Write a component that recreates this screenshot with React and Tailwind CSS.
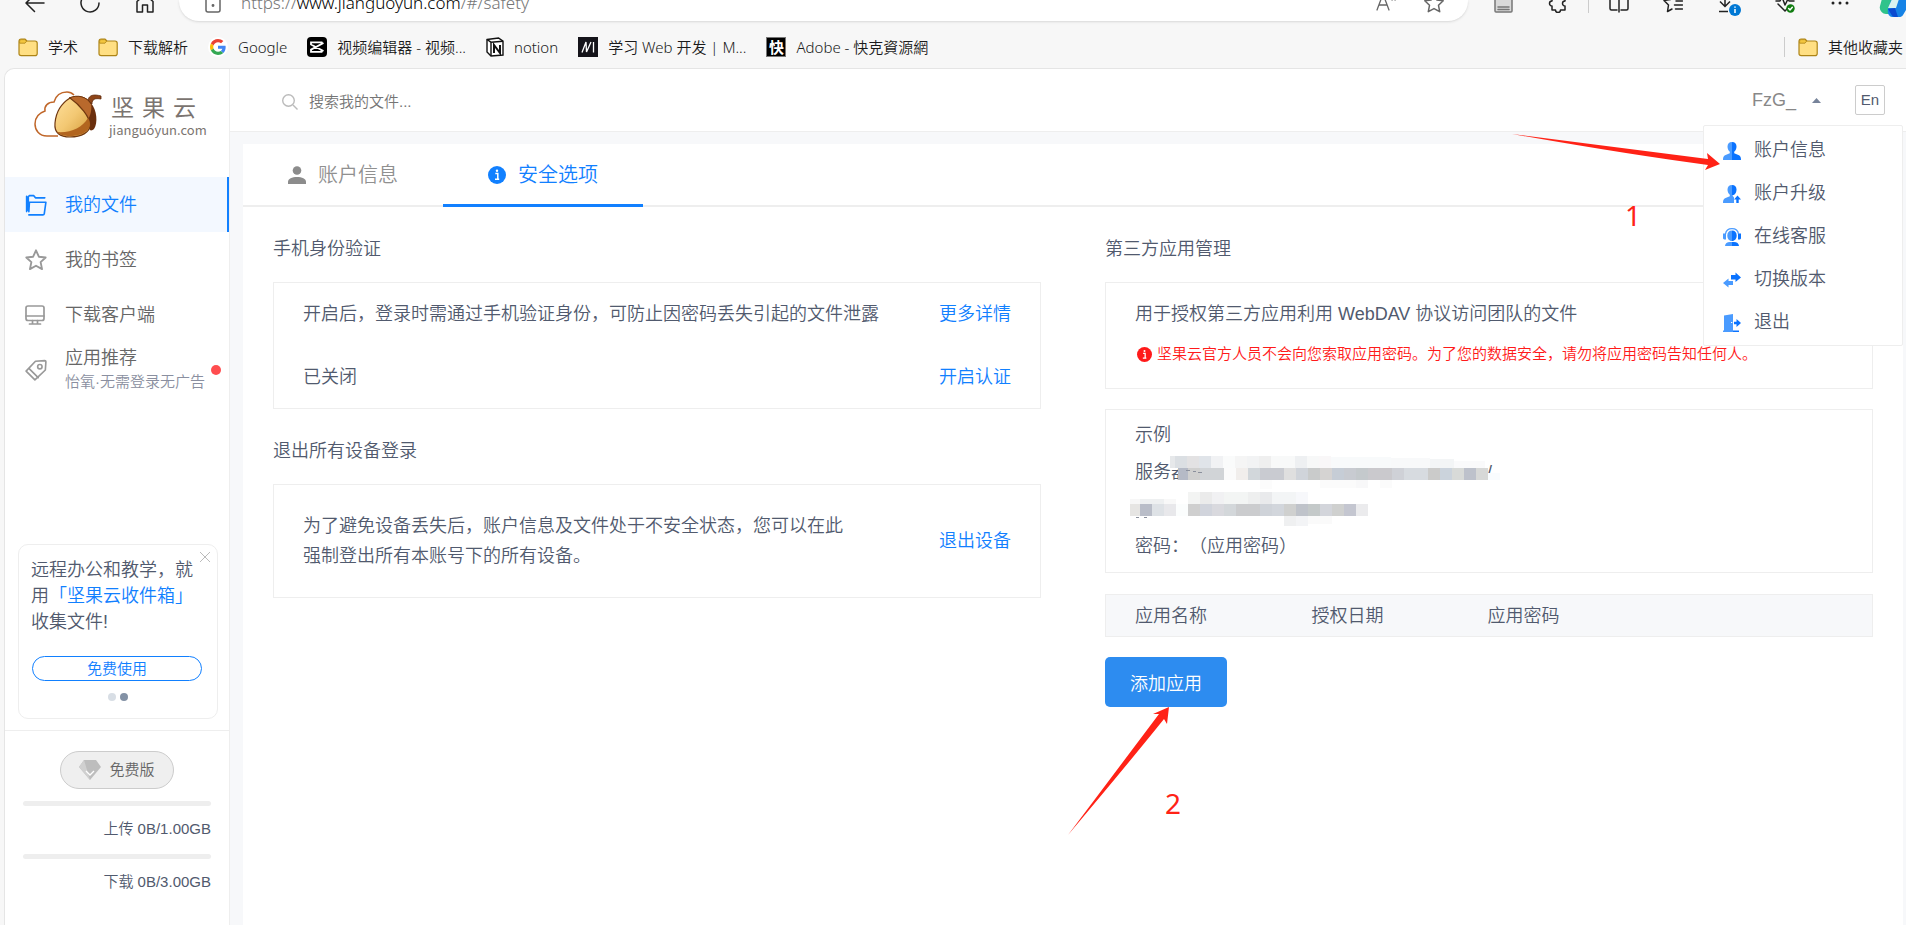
import { useState } from "react";

const bookmarks = [
  { id: "study", label: "学术", icon: <FolderIcon /> },
  { id: "parse", label: "下载解析", icon: <FolderIcon /> },
  { id: "google", label: "Google", icon: <GoogleIcon /> },
  { id: "capcut", label: "视频编辑器 - 视频...", icon: <CapcutIcon /> },
  { id: "notion", label: "notion", icon: <NotionIcon /> },
  { id: "mdn", label: "学习 Web 开发 | M...", icon: <MdnIcon /> },
  { id: "adobe", label: "Adobe - 快克資源網", icon: <KuaiIcon /> },
];

const menuItems = [
  { id: "info", label: "账户信息", icon: <MenuUserIcon /> },
  { id: "upgrade", label: "账户升级", icon: <MenuUpgradeIcon /> },
  { id: "support", label: "在线客服", icon: <MenuSupportIcon /> },
  { id: "version", label: "切换版本", icon: <MenuSwitchIcon /> },
  { id: "exit", label: "退出", icon: <MenuExitIcon /> },
];

// x, y, width, height, fill
const maskBlocks = [
  [40, 0, 5, 12, "#e6e8ea"], [45, 0, 12, 12, "#dbdfe3"], [57, 0, 12, 12, "#e3e2e3"], [69, 0, 12, 12, "#e0e4e9"],
  [81, 0, 12, 12, "#f1f2f4"], [93, 0, 12, 12, "#fafbfb"], [105, 0, 12, 12, "#f5f5f5"], [117, 0, 12, 12, "#f2f3f4"],
  [129, 0, 12, 12, "#efefef"], [141, 0, 24, 12, "#f8f9f9"], [165, 0, 12, 12, "#eef0f2"], [177, 0, 12, 12, "#f7f8f8"],
  [189, 0, 12, 12, "#f9f7f8"], [201, 1, 60, 11, "#f8fafb"], [261, 2, 39, 10, "#f8f9fa"], [300, 3, 24, 9, "#f3f5f6"],
  [324, 5, 31, 7, "#fafafb"],
  [48, 12, 10, 12, "#b5bac6"], [58, 12, 12, 12, "#d0d0cf"], [70, 12, 24, 12, "#d1d4d7"], [94, 12, 12, 12, "#fbfbfb"],
  [106, 12, 12, 12, "#f1eeec"], [118, 12, 12, 12, "#d2d7db"], [130, 12, 24, 12, "#c9cbd1"], [154, 12, 12, 12, "#dfdfdf"],
  [166, 12, 12, 12, "#d0d4da"], [178, 12, 12, 12, "#c9cbcb"], [190, 12, 12, 12, "#d5d3d2"], [202, 12, 12, 12, "#c6cdd6"],
  [214, 12, 12, 12, "#c8cbd1"], [226, 12, 12, 12, "#c4c9cc"], [238, 12, 24, 12, "#cac9cd"], [262, 12, 12, 12, "#cfd1d7"],
  [274, 12, 24, 12, "#d7dbe0"], [298, 12, 12, 12, "#cbcbca"], [310, 12, 12, 12, "#cbd3dc"], [322, 12, 12, 12, "#d8dad8"],
  [334, 12, 12, 12, "#bdc1cb"], [346, 12, 12, 12, "#d7d8d7"], [358, 17, 12, 7, "#f9fcfe"],
  [130, 24, 12, 9, "#fcfcfc"], [190, 24, 36, 8, "#fbfbfb"], [226, 24, 12, 8, "#f8f8f9"], [250, 24, 12, 8, "#fbfbfb"],
  [0, 43, 10, 5, "#f7f7f7"], [10, 43, 24, 5, "#eef0f1"], [34, 43, 12, 5, "#f8f8f8"],
  [58, 36, 12, 12, "#f3f4f3"], [70, 36, 12, 12, "#ebebeb"], [82, 36, 12, 12, "#f1f1f3"], [94, 36, 24, 12, "#f3f5f4"],
  [118, 36, 12, 12, "#eeefef"], [130, 36, 12, 12, "#e9eaec"], [142, 36, 24, 12, "#f3f5f6"], [166, 36, 12, 12, "#f7f8fb"],
  [0, 48, 10, 12, "#e6e5e3"], [10, 48, 12, 12, "#b9bdc8"], [22, 48, 12, 12, "#dee2e6"], [34, 48, 12, 12, "#e8e8eb"],
  [46, 48, 12, 12, "#fbfdfd"], [58, 48, 12, 12, "#cfcfcf"], [70, 48, 12, 12, "#d1d4dc"], [82, 48, 12, 12, "#d9d9de"],
  [94, 48, 12, 12, "#d3d7da"], [106, 48, 24, 12, "#cbccce"], [130, 48, 12, 12, "#cfd3d9"], [142, 48, 12, 12, "#d2d6dc"],
  [154, 48, 12, 12, "#cfd0cf"], [166, 48, 12, 12, "#bfc3ca"], [178, 48, 12, 12, "#c4c9c9"], [190, 48, 12, 12, "#d3d5db"],
  [202, 48, 12, 12, "#cfd0cf"], [214, 48, 12, 12, "#c4c6d0"], [226, 48, 12, 12, "#ebebed"],
  [154, 60, 12, 10, "#eff0f1"], [166, 60, 12, 10, "#f3f4f6"], [178, 60, 24, 8, "#fafafa"],
];

function FolderIcon() {
  return (
    <svg className="h-5 w-5 shrink-0" viewBox="0 0 20 20" aria-hidden="true">
      <path d="M1 4.500C1 2.800 1.800 2 3.200 2H7l2 2h8c1.400 0 2.200.8 2.200 2.200v10.200c0 1.400-.8 2.200-2.200 2.200H3.200C1.800 18.600 1 17.800 1 16.400z" fill="#ffdf83" stroke="#ad8416" strokeWidth="1.200" />
      <path d="M1.600 4.500c0-1.400.5-1.900 1.600-1.900h3.600L8.600 4.200 7 6.200H1.600z" fill="#f3c63f" stroke="#ad8416" strokeWidth=".8" />
    </svg>
  );
}

function GoogleIcon() {
  return (
    <span className="flex h-5 w-5 shrink-0 items-center justify-center rounded-full bg-white">
      <svg className="h-4 w-4" viewBox="0 0 48 48" aria-hidden="true">
        <path fill="#EA4335" d="M24 9.500c3.540 0 6.710 1.220 9.210 3.600l6.850-6.850C35.900 2.380 30.470 0 24 0 14.620 0 6.510 5.380 2.560 13.220l7.980 6.190C12.430 13.720 17.740 9.500 24 9.500z" />
        <path fill="#4285F4" d="M46.980 24.550c0-1.570-.15-3.090-.38-4.550H24v9.020h12.940c-.58 2.960-2.260 5.480-4.780 7.180l7.730 6c4.510-4.180 7.090-10.360 7.090-17.650z" />
        <path fill="#FBBC05" d="M10.530 28.590c-.48-1.450-.76-2.990-.76-4.590s.27-3.140.76-4.590l-7.980-6.190C.92 16.460 0 20.120 0 24c0 3.880.92 7.540 2.560 10.780z" />
        <path fill="#34A853" d="M24 48c6.480 0 11.930-2.130 15.890-5.810l-7.730-6c-2.150 1.450-4.920 2.300-8.160 2.300-6.260 0-11.570-4.220-13.470-9.910l-7.980 6.190C6.510 42.620 14.620 48 24 48z" />
      </svg>
    </span>
  );
}

function CapcutIcon() {
  return (
    <svg className="h-5 w-5 shrink-0" viewBox="0 0 20 20" aria-hidden="true">
      <rect width="20" height="20" rx="4" fill="#000" />
      <path d="M14.500 7.400V5.300H4v2.200L16.500 14M14.500 12.600v2.200H4v-2.200L16.500 6" fill="none" stroke="#fff" strokeWidth="1.800" />
    </svg>
  );
}

function NotionIcon() {
  return (
    <svg className="h-5 w-[18px] shrink-0" viewBox="0 0 18 20" aria-hidden="true">
      <path d="M1 2.500 12.500 1 17 4.200V18L5 19 1 15z" fill="#fff" stroke="#111" strokeWidth="1.400" />
      <path d="M1 2.500 5 5.200 17 4.200M5 5.200V19" fill="none" stroke="#111" strokeWidth="1.400" />
      <path d="M8 16V8l6 8V8" fill="none" stroke="#111" strokeWidth="2" />
    </svg>
  );
}

function MdnIcon() {
  return (
    <svg className="h-5 w-5 shrink-0" viewBox="0 0 20 20" aria-hidden="true">
      <rect width="20" height="20" fill="#15141a" />
      <path d="M4 15.500 8 5l.5 10L13 5M15.500 5v10.500" fill="none" stroke="#fff" strokeWidth="1.300" />
    </svg>
  );
}

function KuaiIcon() {
  return (
    <span className="flex h-5 w-5 shrink-0 items-center justify-center border border-[#777] bg-black text-[15px] leading-4 font-bold text-white">
      快
    </span>
  );
}

function Stroke({ children, className = "h-5 w-5", color = "#222", width = 1.5 }) {
  return (
    <svg
      className={`${className} shrink-0`}
      viewBox="0 0 20 20"
      fill="none"
      stroke={color}
      strokeWidth={width}
      strokeLinecap="round"
      strokeLinejoin="round"
      aria-hidden="true"
    >
      {children}
    </svg>
  );
}

function ToolButton({ label, children }) {
  return (
    <button type="button" aria-label={label} className="shrink-0">
      {children}
    </button>
  );
}

function BrowserToolbar() {
  return (
    <div className="flex h-[21px]">
      <div className="flex h-[13px] items-end gap-[35px] pl-[25px]">
        <ToolButton label="后退">
          <Stroke><path d="M19 10H1.500M9.500 1.500 1 10l8.500 8.500" /></Stroke>
        </ToolButton>
        <ToolButton label="刷新">
          <Stroke><path d="M19 10a9 9 0 1 1-2.600-6.400L19 6M19 1v5h-5" /></Stroke>
        </ToolButton>
        <ToolButton label="主页">
          <Stroke><path d="M2 8.500 10 1.500l8 7V19h-5.500v-7h-5v7H2z" /></Stroke>
        </ToolButton>
      </div>
      <div className="ml-6 flex h-[21px] flex-1 rounded-b-[20px] bg-white px-6 shadow-sm">
        <div className="flex h-[13px] flex-1 items-end">
          <Stroke className="mr-[18px] h-5 w-5" color="#666">
            <rect x="3" y="5" width="14" height="14" rx="2" />
            <path d="M6 5V3a4 4 0 0 1 8 0v2" />
            <circle cx="10" cy="12.500" r=".7" fill="#666" />
          </Stroke>
          <span className="font-[family-name:'Noto_Sans','Noto_Sans_CJK_SC',sans-serif] text-[17px] leading-5 text-[#767676]">
            https://<span className="text-black">www.jianguoyun.com</span>/#/safety
          </span>
        </div>
        <div className="flex h-[13px] items-end gap-7">
          <ToolButton label="大声朗读">
            <Stroke color="#666" width={1.300}><path d="M1 17 7 1l6 16M3 12h8M15 2c1.500 1 1.500 3 1 5M18 1c1.500 2 1.500 4 1 6" /></Stroke>
          </ToolButton>
          <ToolButton label="收藏此页">
            <Stroke color="#666"><path d="m10 1 2.800 5.900 6.400.9-4.700 4.500 1.200 6.400-5.700-3.100-5.700 3.100 1.200-6.400L.8 7.800l6.400-.9z" /></Stroke>
          </ToolButton>
        </div>
      </div>
      <div className="flex h-[13px] items-end pl-[26px]">
        <ToolButton label="阅读模式">
          <Stroke color="#777"><rect x="1" y="1" width="17" height="18" rx="1" fill="#d9d9d9" /><path d="M4 14h11M4 16.500h11" /></Stroke>
        </ToolButton>
        <div className="mr-5 ml-[34px] flex items-end gap-5">
          <ToolButton label="扩展">
            <Stroke><path d="M4 4h3.500a2.500 2.500 0 0 1 5 0H17v4a2.400 2.400 0 1 0 0 5v4H12.500a2.500 2.500 0 0 1-5 0H4V13a2.400 2.400 0 1 1 0-5z" /></Stroke>
          </ToolButton>
          <span className="h-5 w-px bg-[#ccc]" />
        </div>
        <div className="flex items-end gap-[34px]">
          <ToolButton label="分屏">
            <Stroke><path d="M8 3H1v12.500c0 1 .6 1.500 1.500 1.500H8M12 3h7v12.500c0 1-.6 1.500-1.500 1.500H12M10 1v18" /></Stroke>
          </ToolButton>
          <ToolButton label="收藏夹">
            <Stroke><path d="M12 5 10 1 7.500 6.500 1 7.500l4.500 4.500-1 6.500L9 16M13 8h6.500M11.500 12h8M12.500 16h7" /></Stroke>
          </ToolButton>
          <ToolButton label="下载">
            <svg className="h-5 w-6 overflow-visible" viewBox="0 0 24 20" fill="none" stroke="#222" strokeWidth="1.500" aria-hidden="true">
              <path d="M8 0v13M3 8.500l5 5 5-5M2 18.500h9" />
              <circle cx="18" cy="17" r="6" fill="#0078d4" stroke="none" />
              <path d="M18 16v4M18 13.400v1.400" stroke="#fff" />
            </svg>
          </ToolButton>
          <ToolButton label="浏览器概要">
            <Stroke><path d="M1 8h4l2-4 3 8 3-6 1 2h5M3 11l7 7 3-3" /><circle cx="15.500" cy="15.500" r="4.200" fill="#107c10" stroke="none" /><path d="m13.700 15.500 1.300 1.400 2.300-2.600" stroke="#fff" /></Stroke>
          </ToolButton>
          <ToolButton label="更多">
            <svg className="h-5 w-5" viewBox="0 0 20 20" fill="#222" aria-hidden="true">
              <circle cx="4" cy="10" r="1.500" /><circle cx="11" cy="10" r="1.500" /><circle cx="18" cy="10" r="1.500" />
            </svg>
          </ToolButton>
          <ToolButton label="Copilot">
            <svg className="-mb-1 -ml-1 h-7 w-[27px]" viewBox="0 0 27 28" aria-hidden="true">
              <path d="M8 3h12l-5 20c-.5 1.500-1.500 2-3 2H7c-4 0-7-4-6-8L4 6c.6-2 2-3 4-3z" fill="#2fc38b" />
              <path d="M9 20 14 5h13v16l-3 5c-1 1.500-2 2-4 2h-7c-3 0-5-4-4-8z" fill="#1683e6" />
              <path d="M9 20l3 5c1 2 2 3 4 3h3l-3-9z" fill="#0b4ad0" />
              <path d="M13 10h7l-3 9h-8z" fill="#d9f3f0" />
            </svg>
          </ToolButton>
        </div>
      </div>
    </div>
  );
}

function BookmarksBar() {
  return (
    <nav aria-label="收藏夹栏" className="flex h-[47px] items-center overflow-hidden pt-1 pl-[18px] font-[family-name:'Noto_Sans','Noto_Sans_CJK_SC',sans-serif] text-[15px] leading-5 text-[#1b1b1b]">
      <div className="flex flex-1 items-center gap-5">
        {bookmarks.map((item) => (
          <a key={item.id} href="#bookmark" className="flex items-center gap-[10px] whitespace-nowrap">
            {item.icon}
            <span>{item.label}</span>
          </a>
        ))}
      </div>
      <a href="#bookmark" className="flex items-center gap-[10px] pr-[3px] whitespace-nowrap">
        <span className="mr-[3px] h-5 w-px bg-[#ccc]" />
        <FolderIcon />
        <span>其他收藏夹</span>
      </a>
    </nav>
  );
}

function Logo() {
  return (
    <a href="#home" className="flex h-[108px] items-start gap-[7px] pt-[21px] pl-[29px]" aria-label="坚果云">
      <svg className="h-12 w-[68px] shrink-0" viewBox="0 0 68 48" aria-hidden="true">
        <defs>
          <linearGradient id="nut" x1="0" y1="0" x2="1" y2="1">
            <stop offset="0" stopColor="#ffe09c" />
            <stop offset=".5" stopColor="#f3c873" />
            <stop offset="1" stopColor="#d29a38" />
          </linearGradient>
        </defs>
        <path d="M24 46H13C5 46 1 40 1 34c0-7 4-11 10-13-1-5 3-9 9-9 2-7 7-10 13-10 3 0 5 1 7 3" fill="none" stroke="#c0672a" strokeWidth="1.500" />
        <path d="M35 8c8-4 17-2 22 5 6 7 7 20 3 26-1 1-3 2-4 1z" fill="#6b2f0d" />
        <path d="M35 8c8-4 17-2 22 5 1 6 0 12-4 18l-2 1z" fill="#b9692c" />
        <path d="M58 14c0-5 3-6 9-5V6c-7-2-12-1-13 4z" fill="#8e4518" stroke="#5f290b" strokeWidth=".8" />
        <path d="M36 8c-8 5-14 14-15 25-1 10 5 14 15 14 12 0 20-5 20-12 0-8-10-20-20-27z" fill="url(#nut)" stroke="#70370f" strokeWidth="1.200" />
        <path d="M23 42c14 1 25-4 31-14 6 9-2 18-18 18-6 0-10-1-13-4z" fill="#b2651f" />
        <path d="M35 8c9-4 18-1 22 6" fill="none" stroke="#70370f" />
      </svg>
      <span className="flex flex-col pt-1 text-[#7b7470]">
        <span className="flex gap-2 pl-[2px] text-[23px] leading-7 font-normal">
          <span>坚</span>
          <span>果</span>
          <span>云</span>
        </span>
        <span className="font-[family-name:'Noto_Sans_CJK_SC',sans-serif] text-[13px] leading-4 font-normal">jianguóyun.com</span>
      </span>
    </a>
  );
}

function NavItem({ icon, label, note, active }) {
  return (
    <a
      href="#nav"
      aria-current={active ? "page" : undefined}
      className={`flex h-[55px] items-center border-r-2 pl-5 text-[18px] leading-6 ${
        active ? "border-[#1180ff] bg-[#f3f8ff] text-[#1180ff]" : "border-transparent text-[#666]"
      }`}
    >
      <span className="w-10">{icon}</span>
      {note ? (
        <>
          <span className="flex flex-1 flex-col whitespace-nowrap">
            <span>{label}</span>
            <span className="text-[15px] text-[#8a8fa0]">{note}</span>
          </span>
          <span className="mr-[6px] h-[10px] w-[10px] shrink-0 rounded-full bg-[#ff4d4f]" />
        </>
      ) : (
        <span>{label}</span>
      )}
    </a>
  );
}

function PromoCard({ onClose }) {
  return (
    <div className="relative mr-[11px] ml-[13px] h-[175px] rounded-[10px] border border-[#eee] px-3 pt-3">
      <button type="button" aria-label="关闭" onClick={onClose} className="absolute top-[6px] right-[6px]">
        <svg className="h-3 w-3" viewBox="0 0 12 12" stroke="#bbb" aria-hidden="true">
          <path d="m1 1 10 10M11 1 1 11" />
        </svg>
      </button>
      <p className="text-[18px] leading-[26px] text-[#515a6e]">
        远程办公和教学，就
        <br />用<a href="#inbox" className="text-[#1180ff]">「坚果云收件箱」</a>
        <br />
        收集文件!
      </p>
      <button type="button" className="mt-[21px] ml-px block h-[25px] w-[170px] rounded-full border border-[#1180ff] text-[15px] leading-5 text-[#1180ff]">
        免费使用
      </button>
      <div className="mt-3 flex justify-center gap-1">
        <span className="h-2 w-2 rounded-full bg-[#d8dee5]" />
        <span className="h-2 w-2 rounded-full bg-[#8391a5]" />
      </div>
    </div>
  );
}

function Quota({ label }) {
  return (
    <div>
      <div className="h-[5px] rounded-full bg-[#eee]" />
      <p className="mt-3 h-9 text-right text-[15px] leading-[22px] text-[#515a6e]">{label}</p>
    </div>
  );
}

function Sidebar() {
  const [promoOpen, setPromoOpen] = useState(true);

  return (
    <aside className="flex w-[225px] shrink-0 flex-col border-r border-[#eee]">
      <Logo />
      <nav aria-label="主导航">
        <NavItem
          active
          label="我的文件"
          icon={
            <Stroke className="h-[22px] w-[22px]" color="#1180ff">
              <path d="M3 15V2.500L4 1.500h4l1.500 2H18M3.500 16l.5-8.500h15L17.500 18q-.2 1-1.200 1H3.500M1.500 16V2" />
            </Stroke>
          }
        />
        <NavItem
          label="我的书签"
          icon={
            <Stroke className="h-[22px] w-[22px]" color="#999" width={1.700}>
              <path d="m10 1.200 2.600 5.800 6.200.7-4.600 4.200 1.300 6.400L10 15.200l-5.500 3.100 1.300-6.400L1.200 7.700 7.400 7z" />
            </Stroke>
          }
        />
        <NavItem
          label="下载客户端"
          icon={
            <Stroke color="#999" width={1.700}>
              <rect x="1" y="1" width="18" height="14.500" rx="2" />
              <path d="M1 11h18M7.500 15.500v3M12.500 15.500v3M4.500 19h11" />
            </Stroke>
          }
        />
        <NavItem
          label="应用推荐"
          note="怡氧·无需登录无广告"
          icon={
            <Stroke className="h-[22px] w-[22px]" color="#999" width={1.500}>
              <path d="M9.500 2 18 1.500q1 0 1 1L18.500 10 9 19 1 11zM4 9l8 8" />
              <circle cx="13.500" cy="7" r="2" />
            </Stroke>
          }
        />
      </nav>
      <div className="mt-auto pt-6">
        {promoOpen ? <PromoCard onClose={() => setPromoOpen(false)} /> : null}
        <div className="mt-[11px] h-[195px] border-t border-[#eee] pt-5 pr-[18px] pl-[18px]">
          <button type="button" className="mx-auto flex h-[38px] w-[114px] items-center justify-center gap-2 rounded-full border border-[#ccc] bg-[#efefef] text-[15px] text-[#666]">
            <svg className="h-[22px] w-[22px]" viewBox="0 0 22 22" aria-hidden="true">
              <path d="M5 1h12l5 7-11 13L0 8z" fill="#bdbdbd" />
              <path d="M5 1 0 8l11 13z" fill="#d0d0d0" />
              <path d="m7 12 4 4 4-4" fill="none" stroke="#fff" strokeWidth="1.300" />
            </svg>
            免费版
          </button>
          <div className="mt-3">
            <Quota label="上传 0B/1.00GB" />
            <Quota label="下载 0B/3.00GB" />
          </div>
        </div>
      </div>
    </aside>
  );
}

function MenuUserIcon() {
  return (
    <svg className="h-[18px] w-[18px]" viewBox="0 0 18 18" aria-hidden="true">
      <path d="M9 0C6 0 4.500 2 4.500 4.500c0 2 .8 4 2.300 5.200v1.500L2 13.200C.5 14 0 15.500 0 18h9z" fill="#4a9bff" />
      <path d="M9 0c3 0 4.500 2 4.500 4.500 0 2-.8 4-2.300 5.200v1.500l4.800 2c1.500.8 2 2.300 2 4.800H9z" fill="#0a73ff" />
    </svg>
  );
}

function MenuUpgradeIcon() {
  return (
    <svg className="h-[18px] w-[18px]" viewBox="0 0 18 18" aria-hidden="true">
      <path d="M9 0C6 0 4.500 2 4.500 4.500c0 2 .8 4 2.300 5.200v1.500L2 13.200C.5 14 0 15.500 0 18h11v-5.500L9 10z" fill="#4a9bff" />
      <path d="M9 0c3 0 4.500 2 4.500 4.500 0 2-.8 4-2.300 5.200l-2.200.8z" fill="#0a73ff" />
      <path d="m14.500 10.500 3.500 4h-2.300V18h-2.400v-3.500H11z" fill="#0a73ff" />
    </svg>
  );
}

function MenuSupportIcon() {
  return (
    <svg className="h-[18px] w-[18px]" viewBox="0 0 18 18" aria-hidden="true">
      <path d="M9 2.500C5.800 2.500 4.300 4.500 4.300 7.500S6 13 9 13zM2 18c.3-2.500 2-4 5-4h2v4zM0 5.500h3v6H1L0 10.500z" fill="#4a9bff" />
      <path d="M9 2.500c3.200 0 4.700 2 4.700 5S12 13 9 13zM16 18c-.3-2.500-2-4-5-4H9v4zM18 5.500h-3v6h2l1-1z" fill="#0a73ff" />
      <path d="M2.500 6C3 2.500 5.500.7 9 .7s6 1.800 6.500 5.300" fill="none" stroke="#4a9bff" strokeWidth="1.300" />
    </svg>
  );
}

function MenuSwitchIcon() {
  return (
    <svg className="h-[18px] w-[18px]" viewBox="0 0 18 18" aria-hidden="true">
      <path d="M8 4h4.500V1.500L18 6.500l-5.500 4.500V8.500H8z" fill="#0a73ff" />
      <path d="M10 10H5.500V7.500L0 12l5.500 4.500V14H10z" fill="#4a9bff" />
    </svg>
  );
}

function MenuExitIcon() {
  return (
    <svg className="h-[18px] w-[18px]" viewBox="0 0 18 18" aria-hidden="true">
      <path d="M1 1.500 10 0v18H0v-1.500h1z" fill="#4a9bff" />
      <path d="M8 8.500h1.300" stroke="#fff" />
      <path d="M10 16.500h6V18h-6zM11 7.800h2.500V5L18 9l-4.500 4v-2.700H11z" fill="#0a73ff" />
    </svg>
  );
}

function InfoDot({ className }) {
  return (
    <svg className={`${className} shrink-0`} viewBox="0 0 18 18" aria-hidden="true">
      <circle cx="9" cy="9" r="9" fill="currentColor" />
      <path d="M7.300 7.500h2.500V13M7 13.200h4.200" fill="none" stroke="#fff" strokeWidth="1.500" />
      <circle cx="9" cy="4.800" r="1.200" fill="#fff" />
    </svg>
  );
}

function TopBar() {
  const [menuOpen, setMenuOpen] = useState(true);

  return (
    <header className="relative flex h-[63px] items-center border-b border-[#eee] pr-[21px] pl-[52px]">
      <label className="flex flex-1 items-center gap-[11px] pt-1">
        <svg className="h-4 w-4" viewBox="0 0 16 16" fill="none" stroke="#bbb" strokeWidth="1.400" aria-hidden="true">
          <circle cx="6.500" cy="6.500" r="5.800" />
          <path d="m11 11 4.500 4.500" />
        </svg>
        <input
          type="text"
          aria-label="搜索我的文件"
          placeholder="搜索我的文件..."
          className="w-60 text-[15px] leading-6 text-[#666] outline-none placeholder:text-[#757575]"
        />
      </label>
      <button
        type="button"
        aria-expanded={menuOpen}
        onClick={() => setMenuOpen(!menuOpen)}
        className="mr-[34px] flex items-center gap-4 text-[18px] leading-6 text-[#888]"
      >
        FzG_
        <svg className="h-[5px] w-[9px]" viewBox="0 0 9 5" aria-hidden="true">
          <path d="M4.500 0 9 5H0z" fill="#77839a" />
        </svg>
      </button>
      <button type="button" className="h-[30px] w-[30px] rounded-xs border border-[#ccc] text-[15px] text-[#515a6e]">
        En
      </button>
      {menuOpen ? (
        <ul className="absolute top-14 right-[3px] z-10 w-[200px] rounded-xs border border-[#eee] bg-white pt-[3px] pb-px">
          {menuItems.map((item) => (
            <li key={item.id}>
              <a href="#menu" className="flex h-[43px] items-center gap-[13px] pl-[19px] text-[18px] text-[#515a6e]">
                {item.icon}
                {item.label}
              </a>
            </li>
          ))}
        </ul>
      ) : null}
      <svg className="absolute top-[64px] right-[185px] z-20 h-[38px] w-[210px]" viewBox="0 0 210 38" aria-hidden="true">
        <path d="M1 1 197 26 196 20 209 31 194 37 197 32Q120 22 1 1z" fill="#ff2216" />
      </svg>
      <span className="absolute top-[130px] right-[265px] z-20 font-[family-name:'Noto_Sans',sans-serif] text-[28px] leading-8 font-normal text-[#ff2216]">
        1
      </span>
    </header>
  );
}

function Tab({ icon, label, active }) {
  return (
    <button
      type="button"
      role="tab"
      aria-selected={active}
      className={`-mb-[2px] flex h-[63px] w-[200px] items-center justify-center gap-3 border-b-3 pt-[2px] text-[20px] ${
        active ? "border-[#1180ff] text-[#1180ff]" : "border-transparent text-[#909090]"
      }`}
    >
      {icon}
      {label}
    </button>
  );
}

function SectionTitle({ children }) {
  return <h2 className="mt-7 mb-[19px] text-[18px] leading-7 text-[#515a6e]">{children}</h2>;
}

function PhoneSection() {
  return (
    <section>
      <SectionTitle>手机身份验证</SectionTitle>
      <div className="flex flex-col gap-[33px] border border-[#eee] px-[29px] py-4">
        <div className="flex justify-between">
          <p>开启后，登录时需通过手机验证身份，可防止因密码丢失引起的文件泄露</p>
          <a href="#more" className="text-[#1180ff]">更多详情</a>
        </div>
        <div className="flex justify-between">
          <p>已关闭</p>
          <a href="#enable" className="text-[#1180ff]">开启认证</a>
        </div>
      </div>
    </section>
  );
}

function LogoutSection() {
  return (
    <section>
      <SectionTitle>退出所有设备登录</SectionTitle>
      <div className="flex items-center justify-between border border-[#eee] px-[29px] py-[26px]">
        <p>
          为了避免设备丢失后，账户信息及文件处于不安全状态，您可以在此
          <br />
          强制登出所有本账号下的所有设备。
        </p>
        <a href="#logout" className="text-[#1180ff]">退出设备</a>
      </div>
    </section>
  );
}

function ThirdPartySection() {
  return (
    <section>
      <SectionTitle>第三方应用管理</SectionTitle>
      <div className="border border-[#eee] px-[29px] pt-4 pb-6">
        <p>用于授权第三方应用利用 WebDAV 协议访问团队的文件</p>
        <p className="mt-[15px] flex items-center gap-[5px] text-[15px] leading-5 text-[#ff1a1a]">
          <InfoDot className="ml-[2px] h-[15px] w-[15px]" />
          坚果云官方人员不会向您索取应用密码。为了您的数据安全，请勿将应用密码告知任何人。
        </p>
      </div>
      <div className="relative mt-5 border border-[#eee] px-[29px] pt-[7px] pb-[7px] leading-[37px]">
        <p>示例</p>
        <p className="flex">
          <span className="w-[352px]">服务器</span>/
        </p>
        <p className="h-[37px]" />
        <p className="[text-spacing-trim:space-all]">密码：（应用密码）</p>
        <svg className="absolute top-[46px] left-[24px] h-[72px] w-[372px]" viewBox="0 0 372 72" shapeRendering="crispEdges" aria-hidden="true">
          <path d="M48 24h38v12H48z" fill="#fff" />
          {maskBlocks.map(([x, y, w, h, fill]) => (
            <rect key={`${x}-${y}`} x={x} y={y} width={w} height={h} fill={fill} />
          ))}
          <path d="M56 14h4M63 15h3M68 16h4M6 61h3M14 61h3" stroke="#8b909c" />
        </svg>
      </div>
      <table className="mt-[21px] w-full table-fixed border border-[#eee] bg-[#f7f8fa] text-left">
        <thead>
          <tr className="h-[42px]">
            <th className="w-[206px] pl-[29px] font-[350]">应用名称</th>
            <th className="w-[176px] font-[350]">授权日期</th>
            <th className="font-[350]">应用密码</th>
          </tr>
        </thead>
      </table>
      <div className="relative mt-5 w-[122px]">
        <button type="button" className="h-[50px] w-full rounded-[5px] bg-[#2d8cf0] pt-[3px] text-[18px] text-white">
          添加应用
        </button>
        <svg className="absolute top-[50px] right-[57px] h-[129px] w-[103px]" viewBox="0 0 103 129" aria-hidden="true">
          <path d="M1 128 92 7 86 7 102 0 100 17 97 12Q60 58 1 128z" fill="#ff2216" />
        </svg>
        <span className="absolute top-[130px] left-[60px] font-[family-name:'Noto_Sans',sans-serif] text-[28px] leading-8 font-normal text-[#ff2216]">
          2
        </span>
      </div>
    </section>
  );
}

export default function App() {
  return (
    <div className="flex min-h-screen flex-col bg-[#f7f7f7] font-[family-name:'Noto_Sans_CJK_SC',sans-serif] font-[350]">
      <BrowserToolbar />
      <BookmarksBar />
      <div className="ml-1 flex flex-1 rounded-tl-[10px] border-t border-l border-[#e5e5e5] bg-white font-[family-name:'Liberation_Sans','Noto_Sans_CJK_SC',sans-serif]">
        <Sidebar />
        <div className="flex min-w-0 flex-1 flex-col">
          <TopBar />
          <div className="flex flex-1 bg-[#f7f8fa] pt-3 pr-[3px] pl-[13px]">
            <main className="flex-1 bg-white">
              <div role="tablist" className="flex h-[63px] border-b-2 border-[#eee]">
                <Tab
                  label="账户信息"
                  icon={
                    <svg className="h-[18px] w-[18px]" viewBox="0 0 18 18" fill="#8c8c8c" aria-hidden="true">
                      <circle cx="9" cy="4.500" r="4.300" />
                      <path d="M0 18v-2c0-3.500 4-5 9-5s9 1.500 9 5v2z" />
                    </svg>
                  }
                />
                <Tab active label="安全选项" icon={<InfoDot className="h-[18px] w-[18px]" />} />
              </div>
              <div className="grid grid-cols-2 gap-16 px-[30px] text-[18px] leading-[30px] text-[#515a6e]">
                <div>
                  <PhoneSection />
                  <LogoutSection />
                </div>
                <ThirdPartySection />
              </div>
            </main>
          </div>
        </div>
      </div>
    </div>
  );
}
